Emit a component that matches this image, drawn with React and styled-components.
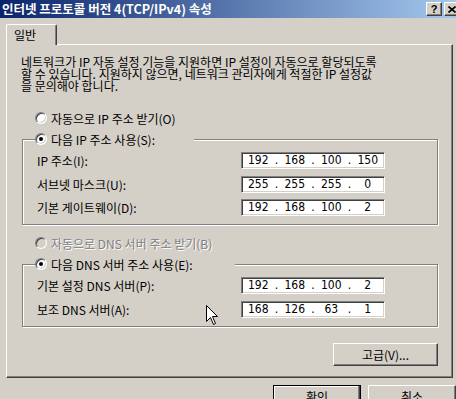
import styled, { createGlobalStyle, css } from "styled-components"

const GlobalStyle = createGlobalStyle`
  html, body {
    margin: 0;
    padding: 0;
    overflow: hidden;
    background: #d4d0c8;
  }
  body {
    font-family: "Noto Sans CJK KR", "Liberation Sans", sans-serif;
    font-size: 12px;
    color: #000;
  }
`

const Window = styled.div`
  position: relative;
  width: 462px;
  height: 399px;
  overflow: hidden;
  background: #d4d0c8;
`

const TitleBar = styled.div`
  display: flex;
  align-items: center;
  height: 18px;
  padding: 0 2px;
  background: linear-gradient(90deg, #0a246a 0%, #a6caf0 100%);
`

const TitleText = styled.div`
  flex: 1;
  color: #fff;
  font-weight: 700;
  font-size: 12.5px;
  line-height: 18px;
  white-space: nowrap;
`

const CaptionButtons = styled.div`
  display: flex;
  gap: 2px;
`

const CaptionButton = styled.div`
  box-sizing: border-box;
  width: 16px;
  height: 14px;
  background: #d4d0c8;
  border: 1px solid;
  border-color: #fff #404040 #404040 #fff;
  box-shadow: inset -1px -1px #808080;
  display: flex;
  align-items: center;
  justify-content: center;
  font: 700 11px "Liberation Sans", sans-serif;
  color: #000;
`

const Body = styled.div`
  padding: 6px 6px 0 6px;
`

const TabStrip = styled.div`
  display: flex;
`

const Tab = styled.div`
  position: relative;
  z-index: 1;
  box-sizing: border-box;
  width: 51px;
  height: 21px;
  margin-bottom: -1px;
  padding: 0 0 1px 7px;
  display: flex;
  align-items: center;
  background: #d4d0c8;
  border-top: 1px solid #fff;
  border-left: 1px solid #fff;
  border-right: 1px solid #404040;
  border-radius: 2px 2px 0 0;
  box-shadow: inset -1px 0 #808080;
`

const Panel = styled.div`
  margin-right: 3px;
  border-top: 1px solid #fff;
  border-left: 1px solid #fff;
  border-right: 1px solid #404040;
  border-bottom: 1px solid #404040;
  box-shadow: inset -1px -1px #808080;
  padding: 11px 14px 11px 15px;
`

const Intro = styled.p`
  margin: 0 0 0 -1px;
  line-height: 12px;
  white-space: nowrap;
`

const RadioRow = styled.label`
  display: flex;
  align-items: center;
  gap: 4px;
  height: 16px;
  white-space: nowrap;
  margin: ${(p) => p.$top || 0}px 0 0 13px;
  color: ${(p) => (p.$disabled ? "#808080" : "#000")};
  text-shadow: ${(p) => (p.$disabled ? "1px 1px #fff" : "none")};
`

const RadioCircle = styled.span`
  box-sizing: border-box;
  width: 12px;
  height: 12px;
  flex: none;
  border-radius: 50%;
  border: 1px solid;
  border-color: #808080 #fff #fff #808080;
  box-shadow: inset 1px 1px #404040, inset -1px -1px #d4d0c8;
  background: ${(p) => (p.$disabled ? "#d4d0c8" : "#fff")};
  display: flex;
  align-items: center;
  justify-content: center;
`

const RadioDot = styled.span`
  width: 4px;
  height: 4px;
  border-radius: 50%;
  background: #000;
`

const Group = styled.fieldset`
  margin: ${(p) => p.$top}px 0 0;
  padding: 5px 52px 8px 14px;
  min-width: 0;
  border: 1px solid #808080;
  box-shadow: inset 1px 1px #fff, 1px 1px #fff;
`

const GroupLegend = styled.legend`
  box-sizing: border-box;
  width: ${(p) => p.$w}px;
  height: 16px;
  padding: 0;
  margin-left: -2px;
  background: #d4d0c8;
  display: flex;
  align-items: center;
  gap: 4px;
  white-space: nowrap;
`

const FieldGrid = styled.div`
  display: grid;
  grid-template-columns: 1fr 144px;
  align-items: center;
  row-gap: ${(p) => p.$gap}px;
`

const FieldLabel = styled.span`
  white-space: nowrap;
`

const IpBox = styled.div`
  box-sizing: border-box;
  width: 144px;
  height: 17px;
  padding: 0 1px;
  background: #fff;
  border: 1px solid;
  border-color: #808080 #fff #fff #808080;
  box-shadow: inset 1px 1px #404040, inset -1px -1px #d4d0c8;
  display: grid;
  grid-template-columns: 1fr 6px 1fr 6px 1fr 6px 1fr;
  align-items: center;
  font: 12px "Liberation Sans Narrow", "DejaVu Sans Condensed", "Liberation Sans", sans-serif;
  line-height: 15px;
`

const Octet = styled.span`
  text-align: center;
`

const Dot = styled.span`
  text-align: center;
`

const Button = styled.button`
  box-sizing: border-box;
  width: ${(p) => p.$w}px;
  height: 23px;
  padding: 0;
  background: #d4d0c8;
  font: 12px "Noto Sans CJK KR", "Liberation Sans", sans-serif;
  color: #000;
  border: 1px solid;
  border-color: #fff #404040 #404040 #fff;
  box-shadow: inset -1px -1px #808080;
  ${(p) =>
    p.$default &&
    css`
      border-color: #000;
      box-shadow: inset -1px -1px #404040, inset -2px -2px #808080, inset 1px 1px #fff;
    `}
`

const AdvancedRow = styled.div`
  display: flex;
  justify-content: flex-end;
  margin-top: 16px;
`

const ButtonRow = styled.div`
  display: flex;
  justify-content: flex-end;
  gap: 7px;
  margin-top: 7px;
`

const Cursor = styled.svg`
  position: absolute;
  left: 206px;
  top: 305px;
`

const Radio = ({ checked, disabled }) => (
  <RadioCircle $disabled={disabled}>{checked && <RadioDot />}</RadioCircle>
)

const IpField = ({ value }) => {
  const parts = value.split(".")
  return (
    <IpBox>
      {parts.map((n, i) => [
        <Octet key={"o" + i}>{n}</Octet>,
        i < 3 ? <Dot key={"d" + i}>.</Dot> : null,
      ])}
    </IpBox>
  )
}

const ipRows = [
  ["IP 주소(I):", "192.168.100.150"],
  ["서브넷 마스크(U):", "255.255.255.0"],
  ["기본 게이트웨이(D):", "192.168.100.2"],
]

const dnsRows = [
  ["기본 설정 DNS 서버(P):", "192.168.100.2"],
  ["보조 DNS 서버(A):", "168.126.63.1"],
]

export default function App() {
  return (
    <>
      <GlobalStyle />
      <Window>
        <TitleBar>
          <TitleText>인터넷 프로토콜 버전 4(TCP/IPv4) 속성</TitleText>
          <CaptionButtons>
            <CaptionButton>?</CaptionButton>
            <CaptionButton>
              <svg width="8" height="7" viewBox="0 0 8 7">
                <path d="M0.5 0.5 L7.5 6.5 M7.5 0.5 L0.5 6.5" stroke="#000" strokeWidth="1.6" />
              </svg>
            </CaptionButton>
          </CaptionButtons>
        </TitleBar>

        <Body>
          <TabStrip>
            <Tab>일반</Tab>
          </TabStrip>
          <Panel>
            <Intro>
              네트워크가 IP 자동 설정 기능을 지원하면 IP 설정이 자동으로 할당되도록
              <br />
              할 수 있습니다. 지원하지 않으면, 네트워크 관리자에게 적절한 IP 설정값
              <br />을 문의해야 합니다.
            </Intro>

            <RadioRow $top={18}>
              <Radio />
              자동으로 IP 주소 받기(O)
            </RadioRow>

            <Group $top={5}>
              <GroupLegend $w={159}>
                <Radio checked />
                다음 IP 주소 사용(S):
              </GroupLegend>
              <FieldGrid $gap={6.5}>
                {ipRows.map(([label, ip]) => [
                  <FieldLabel key={label}>{label}</FieldLabel>,
                  <IpField key={label + ip} value={ip} />,
                ])}
              </FieldGrid>
            </Group>

            <RadioRow $top={10} $disabled>
              <Radio disabled />
              자동으로 DNS 서버 주소 받기(B)
            </RadioRow>

            <Group $top={5}>
              <GroupLegend $w={200}>
                <Radio checked />
                다음 DNS 서버 주소 사용(E):
              </GroupLegend>
              <FieldGrid $gap={7}>
                {dnsRows.map(([label, ip]) => [
                  <FieldLabel key={label}>{label}</FieldLabel>,
                  <IpField key={label + ip} value={ip} />,
                ])}
              </FieldGrid>
            </Group>

            <AdvancedRow>
              <Button $w={105}>고급(V)...</Button>
            </AdvancedRow>
          </Panel>

          <ButtonRow>
            <Button $w={88} $default>
              확인
            </Button>
            <Button $w={88}>취소</Button>
          </ButtonRow>
        </Body>

        <Cursor width="13" height="21" viewBox="0 0 13 21">
          <path
            d="M0.5 0.5 L0.5 16.5 L4.5 12.5 L7.5 19.5 L9.5 18.5 L6.5 11.5 L11.5 11.5 Z"
            fill="#fff"
            stroke="#000"
            strokeWidth="1"
          />
        </Cursor>
      </Window>
    </>
  )
}
